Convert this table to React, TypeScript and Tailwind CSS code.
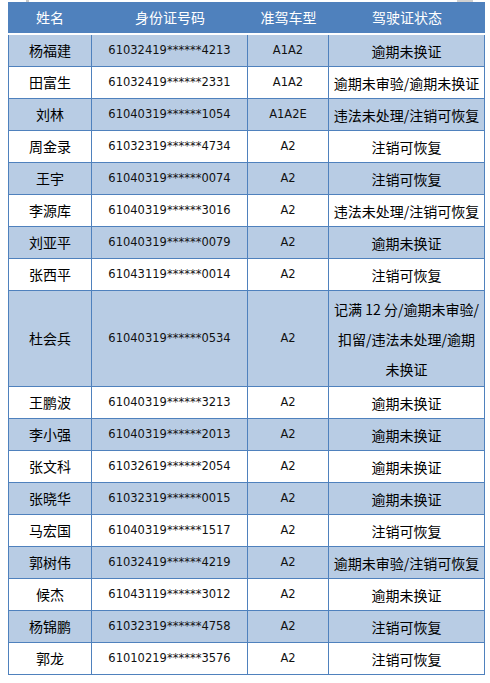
import React from 'react';

type Row = { name: string; id: string; type: string; status: string[]; tall?: boolean };

const rows: Row[] = [
  { name: '杨福建', id: '61032419******4213', type: 'A1A2', status: ['逾期未换证'] },
  { name: '田富生', id: '61032419******2331', type: 'A1A2', status: ['逾期未审验/逾期未换证'] },
  { name: '刘林', id: '61040319******1054', type: 'A1A2E', status: ['违法未处理/注销可恢复'] },
  { name: '周金录', id: '61032319******4734', type: 'A2', status: ['注销可恢复'] },
  { name: '王宇', id: '61040319******0074', type: 'A2', status: ['注销可恢复'] },
  { name: '李源库', id: '61040319******3016', type: 'A2', status: ['违法未处理/注销可恢复'] },
  { name: '刘亚平', id: '61040319******0079', type: 'A2', status: ['逾期未换证'] },
  { name: '张西平', id: '61043119******0014', type: 'A2', status: ['注销可恢复'] },
  {
    name: '杜会兵',
    id: '61040319******0534',
    type: 'A2',
    status: ['记满 12 分/逾期未审验/', '扣留/违法未处理/逾期', '未换证'],
    tall: true,
  },
  { name: '王鹏波', id: '61040319******3213', type: 'A2', status: ['逾期未换证'] },
  { name: '李小强', id: '61040319******2013', type: 'A2', status: ['逾期未换证'] },
  { name: '张文科', id: '61032619******2054', type: 'A2', status: ['逾期未换证'] },
  { name: '张晓华', id: '61032319******0015', type: 'A2', status: ['逾期未换证'] },
  { name: '马宏国', id: '61040319******1517', type: 'A2', status: ['注销可恢复'] },
  { name: '郭树伟', id: '61032419******4219', type: 'A2', status: ['逾期未审验/注销可恢复'] },
  { name: '候杰', id: '61043119******3012', type: 'A2', status: ['逾期未换证'] },
  { name: '杨锦鹏', id: '61032319******4758', type: 'A2', status: ['注销可恢复'] },
  { name: '郭龙', id: '61010219******3576', type: 'A2', status: ['注销可恢复'] },
];

const cjk = "font-['Noto_Sans_CJK_SC',sans-serif]";
const latin = "font-['DejaVu_Sans','Noto_Sans_CJK_SC',sans-serif]";

export default function App() {
  return (
    <div className="min-h-screen bg-white">
      {/* scanner marks along the top edge */}
      <div className="flex h-[2px]">
        <div className="ml-[26px] h-[2px] w-[3px] bg-[#c8c8c8]" />
        <div className="ml-[428px] h-[2px] w-[16px] bg-[#d0d0d0]" />
      </div>

      <div className="ml-[8px] w-[477px]">
        {/* header */}
        <div className={`flex h-[33px] border-b-2 border-white bg-[#4f81bd] text-[14px] text-white ${cjk}`}>
          <div className="flex w-[84px] items-center justify-center">姓名</div>
          <div className="flex w-[156px] items-center justify-center">身份证号码</div>
          <div className="flex w-[81px] items-center justify-center">准驾车型</div>
          <div className="flex w-[156px] items-center justify-center">驾驶证状态</div>
        </div>

        {rows.map((r, i) => (
          <div
            key={r.name}
            className={`flex border-b border-[#4f81bd] ${r.tall ? 'h-[96px]' : 'h-[32px]'} ${
              i % 2 === 0 ? 'bg-[#b8cce4]' : 'bg-white'
            }`}
          >
            <div className={`flex w-[84px] items-center justify-center border-x border-[#4f81bd] text-[14px] text-black ${cjk}`}>
              {r.name}
            </div>
            <div className={`flex w-[156px] items-center justify-center border-r border-[#4f81bd] text-[11.5px] text-[#111] ${latin}`}>
              {r.id}
            </div>
            <div className={`flex w-[81px] items-center justify-center border-r border-[#4f81bd] text-[11.5px] text-[#111] ${latin}`}>
              {r.type}
            </div>
            <div
              className={`flex w-[156px] flex-col items-center justify-center border-r border-[#4f81bd] text-[14px] leading-[30px] text-black ${cjk}`}
            >
              {r.status.map((s) => (
                <span key={s} className="whitespace-nowrap">
                  {s}
                </span>
              ))}
            </div>
          </div>
        ))}
      </div>
    </div>
  );
}
